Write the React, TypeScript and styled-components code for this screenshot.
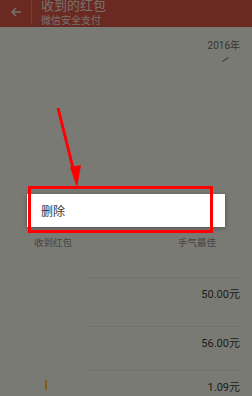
import React from "react";
import styled, { createGlobalStyle } from "styled-components";

const Global = createGlobalStyle`
  html, body { margin: 0; padding: 0; }
  body { font-family: Roboto, "Noto Sans CJK SC", sans-serif; background: #f4f4e8; }
`;

const Screen = styled.div`
  position: relative;
  width: 252px;
  height: 396px;
  overflow: hidden;
  background: #f4f4e8;
  display: flex;
  flex-direction: column;
`;

const Header = styled.div`
  height: 27px;
  flex: none;
  background: #d45444;
  display: flex;
  align-items: flex-start;
  color: #fff;
`;

const Back = styled.div`
  width: 32px;
  height: 24px;
  display: flex;
  align-items: center;
  justify-content: center;
  border-right: 1px solid rgba(255,255,255,0.25);
  box-sizing: border-box;
`;

const Titles = styled.div`
  display: flex;
  flex-direction: column;
  padding-left: 9px;
  margin-top: -3px;
`;

const Title = styled.div`
  font-family: "Noto Sans CJK SC", sans-serif;
  font-size: 13px;
  line-height: 15px;
  color: #f0e0dc;
`;

const Sub = styled.div`
  font-family: "Noto Sans CJK SC", sans-serif;
  font-size: 10px;
  line-height: 13px;
  margin-top: 1px;
  color: #f0e0dc;
`;

const Body = styled.div`
  display: flex;
  flex-direction: column;
  padding: 0 12px 0 0;
`;

const YearBox = styled.div`
  align-self: flex-end;
  margin-top: 12px;
  display: flex;
  flex-direction: column;
  align-items: flex-end;
`;

const Year = styled.div`
  font-size: 10px;
  line-height: 14px;
  color: #6a6a66;
  font-family: Roboto, "Noto Sans CJK SC", sans-serif;
`;

const Chevron = styled.svg`
  margin: 4px 11px 0 0;
`;

const Summary = styled.div`
  display: grid;
  grid-template-columns: 1fr 1fr;
  margin-top: 146px;
  padding-left: 34px;
`;

const Stat = styled.div<{ $right?: boolean }>`
  display: flex;
  flex-direction: column;
  align-items: ${(p) => (p.$right ? "flex-end" : "flex-start")};
  padding-right: ${(p) => (p.$right ? "24px" : "0")};
`;

const Big = styled.div`
  font-size: 22px;
  line-height: 24px;
  color: #333;
  padding-left: 6px;
  letter-spacing: 3px;
`;

const Label = styled.div`
  font-family: "Noto Sans CJK SC", sans-serif;
  font-size: 9.5px;
  line-height: 14px;
  color: #8e8e88;
  margin-top: 3px;
`;

const List = styled.div`
  margin-top: 28px;
  margin-left: 88px;
  display: flex;
  flex-direction: column;
`;

const Row = styled.div<{ $h: number }>`
  height: ${(p) => p.$h}px;
  border-top: 1px solid #e6e6dc;
  display: flex;
  align-items: flex-start;
  justify-content: flex-end;
  padding-top: 10px;
  box-sizing: border-box;
  position: relative;
`;

const Amount = styled.div`
  font-size: 11px;
  line-height: 13px;
  color: #3a3a3a;
  font-family: Roboto, "Noto Sans CJK SC", sans-serif;
`;

const Mark = styled.div`
  position: absolute;
  left: -43px;
  top: 9px;
  width: 2px;
  height: 10px;
  background: #ffc030;
`;

const Dim = styled.div`
  position: absolute;
  inset: 0;
  background: rgba(0, 0, 0, 0.5);
`;

const Dialog = styled.div`
  position: absolute;
  left: 27px;
  top: 194px;
  width: 198px;
  height: 33px;
  background: #fff;
  box-shadow: 0 1px 5px rgba(0, 0, 0, 0.35);
  display: flex;
  align-items: center;
  padding-left: 14px;
  box-sizing: border-box;
  font-family: "Noto Sans CJK SC", sans-serif;
  font-size: 12px;
  color: #333;
`;

const Highlight = styled.div`
  position: absolute;
  left: 28px;
  top: 186px;
  width: 185px;
  height: 47px;
  border: 3px solid #ff0000;
  box-sizing: border-box;
`;

const ArrowSvg = styled.svg`
  position: absolute;
  left: 0;
  top: 0;
  pointer-events: none;
`;

export default function App() {
  return (
    <>
      <Global />
      <Screen>
        <Header>
          <Back>
            <svg width="12" height="12" viewBox="0 0 12 12">
              <path d="M11 6H2M6 2L2 6l4 4" stroke="#f0e0dc" strokeWidth="1.5" fill="none" />
            </svg>
          </Back>
          <Titles>
            <Title>收到的红包</Title>
            <Sub>微信安全支付</Sub>
          </Titles>
        </Header>
        <Body>
          <YearBox>
            <Year>2016年</Year>
            <Chevron width="7" height="5" viewBox="0 0 7 5">
              <path d="M0.5 4.5L6.5 0.5" stroke="#555" strokeWidth="1" fill="none" />
            </Chevron>
          </YearBox>
          <Summary>
            <Stat>
              <Big>117</Big>
              <Label>收到红包</Label>
            </Stat>
            <Stat $right>
              <Big>3</Big>
              <Label>手气最佳</Label>
            </Stat>
          </Summary>
          <List>
            <Row $h={49}>
              <Amount>50.00元</Amount>
            </Row>
            <Row $h={44}>
              <Amount>56.00元</Amount>
            </Row>
            <Row $h={44}>
              <Mark />
              <Amount>1.09元</Amount>
            </Row>
          </List>
        </Body>
        <Dim />
        <Dialog>删除</Dialog>
        <Highlight />
        <ArrowSvg width="252" height="396" viewBox="0 0 252 396">
          <line x1="58" y1="108" x2="74" y2="172" stroke="#ff0000" strokeWidth="3" />
          <polygon points="70,167 81,165 77,188" fill="#ff0000" />
        </ArrowSvg>
      </Screen>
    </>
  );
}
